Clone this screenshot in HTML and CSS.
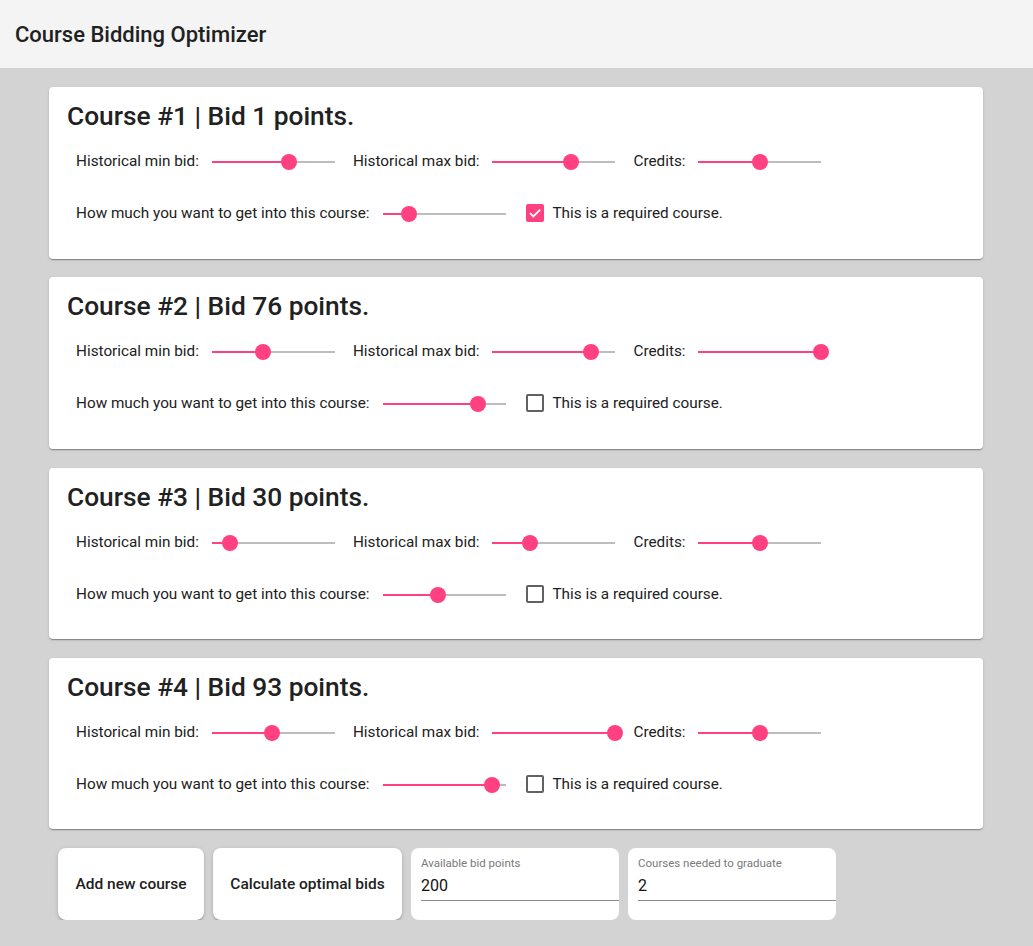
FILE: index.html
```html
<!DOCTYPE html>
<html>
<head>
<meta charset="utf-8">
<title>Course Bidding Optimizer</title>
<link rel="stylesheet" href="styles.css">
</head>
<body>
<header class="topbar">Course Bidding Optimizer</header>
<main class="content">
  <section class="card">
    <h2 class="card-title">Course #1 | Bid 1 points.</h2>
    <div class="row">
      <span class="label">Historical min bid:</span>
      <div class="slider s-min" style="--v:62.6%"><div class="fill"></div><div class="thumb"></div></div>
      <span class="label">Historical max bid:</span>
      <div class="slider s-max" style="--v:65%"><div class="fill"></div><div class="thumb"></div></div>
      <span class="label">Credits:</span>
      <div class="slider s-cred" style="--v:50.4%"><div class="fill"></div><div class="thumb"></div></div>
    </div>
    <div class="row">
      <span class="label">How much you want to get into this course:</span>
      <div class="slider s-want" style="--v:21%"><div class="fill"></div><div class="thumb"></div></div>
      <span class="check checked"><svg viewBox="0 0 18 18" width="18" height="18"><path d="M4 9.2l3.3 3.3L14.2 5.6" fill="none" stroke="#fff" stroke-width="1.8"/></svg></span>
      <span class="check-label">This is a required course.</span>
    </div>
  </section>

  <section class="card">
    <h2 class="card-title">Course #2 | Bid 76 points.</h2>
    <div class="row">
      <span class="label">Historical min bid:</span>
      <div class="slider s-min" style="--v:41.5%"><div class="fill"></div><div class="thumb"></div></div>
      <span class="label">Historical max bid:</span>
      <div class="slider s-max" style="--v:80.5%"><div class="fill"></div><div class="thumb"></div></div>
      <span class="label">Credits:</span>
      <div class="slider s-cred" style="--v:100%"><div class="fill"></div><div class="thumb"></div></div>
    </div>
    <div class="row">
      <span class="label">How much you want to get into this course:</span>
      <div class="slider s-want" style="--v:77%"><div class="fill"></div><div class="thumb"></div></div>
      <span class="check"></span>
      <span class="check-label">This is a required course.</span>
    </div>
  </section>

  <section class="card">
    <h2 class="card-title">Course #3 | Bid 30 points.</h2>
    <div class="row">
      <span class="label">Historical min bid:</span>
      <div class="slider s-min" style="--v:14.6%"><div class="fill"></div><div class="thumb"></div></div>
      <span class="label">Historical max bid:</span>
      <div class="slider s-max" style="--v:31%"><div class="fill"></div><div class="thumb"></div></div>
      <span class="label">Credits:</span>
      <div class="slider s-cred" style="--v:50.4%"><div class="fill"></div><div class="thumb"></div></div>
    </div>
    <div class="row">
      <span class="label">How much you want to get into this course:</span>
      <div class="slider s-want" style="--v:44%"><div class="fill"></div><div class="thumb"></div></div>
      <span class="check"></span>
      <span class="check-label">This is a required course.</span>
    </div>
  </section>

  <section class="card">
    <h2 class="card-title">Course #4 | Bid 93 points.</h2>
    <div class="row">
      <span class="label">Historical min bid:</span>
      <div class="slider s-min" style="--v:48.8%"><div class="fill"></div><div class="thumb"></div></div>
      <span class="label">Historical max bid:</span>
      <div class="slider s-max" style="--v:100%"><div class="fill"></div><div class="thumb"></div></div>
      <span class="label">Credits:</span>
      <div class="slider s-cred" style="--v:50.4%"><div class="fill"></div><div class="thumb"></div></div>
    </div>
    <div class="row">
      <span class="label">How much you want to get into this course:</span>
      <div class="slider s-want" style="--v:88.6%"><div class="fill"></div><div class="thumb"></div></div>
      <span class="check"></span>
      <span class="check-label">This is a required course.</span>
    </div>
  </section>

  <div class="actions">
    <button class="btn btn-add">Add new course</button>
    <button class="btn btn-calc">Calculate optimal bids</button>
    <div class="field">
      <span class="field-label">Available bid points</span>
      <span class="field-value">200</span>
    </div>
    <div class="field">
      <span class="field-label">Courses needed to graduate</span>
      <span class="field-value">2</span>
    </div>
  </div>
</main>
</body>
</html>
```

FILE: styles.css
```css
* { box-sizing: border-box; }
html, body {
  margin: 0;
  padding: 0;
  background: #d3d3d3;
  font-family: Roboto, "Liberation Sans", sans-serif;
  color: #212121;
}
.topbar {
  height: 68px;
  background: #f4f4f4;
  display: flex;
  align-items: center;
  padding-left: 15px;
  font-size: 22px;
  font-weight: 500;
  color: #212121;
}
.content {
  width: 934px;
  margin-left: 49px;
  padding-top: 19px;
  display: flex;
  flex-direction: column;
  gap: 18.83px;
}
.card {
  background: #fff;
  border-radius: 4px;
  box-shadow: 0 2px 1px -1px rgba(0,0,0,.2), 0 1px 1px 0 rgba(0,0,0,.14), 0 1px 3px 0 rgba(0,0,0,.12);
  padding: 15px 18px 26px 18px;
  height: 171.5px;
}
.card-title {
  margin: 0 0 11px 0;
  font-size: 26.3px;
  line-height: 28px;
  font-weight: 500;
  color: #212121;
}
.row {
  display: flex;
  align-items: center;
  height: 40px;
  padding-left: 9px;
  margin-bottom: 12px;
  font-size: 15.3px;
}
.label { white-space: nowrap; }
.slider {
  position: relative;
  width: 123px;
  height: 2px;
  background: #bdbdbd;
  margin-top: 2px;
  flex: none;
}
.fill {
  width: var(--v);
  height: 100%;
  background: #ff4081;
}
.thumb {
  position: absolute;
  left: var(--v);
  top: 50%;
  width: 16px;
  height: 16px;
  border-radius: 50%;
  background: #ff4081;
  transform: translate(-50%, -50%);
}
.s-min { margin-left: 13px; margin-right: 18px; }
.s-max { margin-left: 12px; margin-right: 19px; }
.s-cred { margin-left: 12px; }
.s-want { margin-left: 14px; margin-right: 20px; }
.check {
  width: 18px;
  height: 18px;
  border: 2px solid #616161;
  border-radius: 2px;
  flex: none;
  display: flex;
}
.check.checked {
  background: #ff4081;
  border: none;
}
.check-label {
  margin-left: 8px;
  white-space: nowrap;
}
.actions {
  display: flex;
  gap: 9px;
  padding-left: 9px;
}
.btn {
  height: 72px;
  border: none;
  border-radius: 8px;
  background: #fff;
  font-family: Roboto, "Liberation Sans", sans-serif;
  font-size: 15.5px;
  font-weight: 500;
  color: #212121;
  box-shadow: 0 3px 1px -2px rgba(0,0,0,.2), 0 2px 2px 0 rgba(0,0,0,.14), 0 1px 5px 0 rgba(0,0,0,.12);
  padding: 0;
}
.btn-add { width: 146px; }
.btn-calc { width: 189px; }
.field {
  width: 208px;
  height: 72px;
  background: #fff;
  border-radius: 8px;
  padding: 9px 0 0 10px;
  display: flex;
  flex-direction: column;
}
.field-label {
  font-size: 11.5px;
  line-height: 13px;
  color: #7a7a7a;
}
.field-value {
  margin-top: 6px;
  font-size: 16px;
  line-height: 19px;
  color: #111;
  padding-bottom: 5px;
  border-bottom: 1px solid #8a8a8a;
}
```
